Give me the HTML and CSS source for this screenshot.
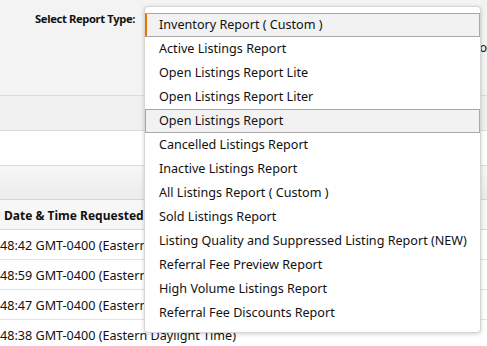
FILE: index.html
```html
<!DOCTYPE html>
<html lang="en">
<head>
<meta charset="utf-8">
<title>Select Report Type</title>
<link rel="stylesheet" href="styles.css">
</head>
<body>
<div class="page">
  <section class="form-area">
    <div class="field-row">
      <span class="field-label">Select Report Type:</span>
      <span class="behind-text">Process</span>
    </div>
  </section>
  <div class="band band-gray"></div>
  <div class="band band-white"></div>
  <div class="band band-grad"></div>
  <div class="table">
    <div class="row head">Date &amp; Time Requested</div>
    <div class="row">48:42 GMT-0400 (Eastern Daylight Time)</div>
    <div class="row">48:59 GMT-0400 (Eastern Daylight Time)</div>
    <div class="row">48:47 GMT-0400 (Eastern Daylight Time)</div>
    <div class="row">48:38 GMT-0400 (Eastern Daylight Time)</div>
  </div>
  <ul class="dropdown">
    <li class="opt selected">Inventory Report ( Custom )</li>
    <li class="opt">Active Listings Report</li>
    <li class="opt">Open Listings Report Lite</li>
    <li class="opt">Open Listings Report Liter</li>
    <li class="opt hover">Open Listings Report</li>
    <li class="opt">Cancelled Listings Report</li>
    <li class="opt">Inactive Listings Report</li>
    <li class="opt">All Listings Report ( Custom )</li>
    <li class="opt">Sold Listings Report</li>
    <li class="opt">Listing Quality and Suppressed Listing Report (NEW)</li>
    <li class="opt">Referral Fee Preview Report</li>
    <li class="opt">High Volume Listings Report</li>
    <li class="opt">Referral Fee Discounts Report</li>
  </ul>
</div>
</body>
</html>
```

FILE: styles.css
```css
html, body {
  margin: 0;
  padding: 0;
}
body {
  background: #f3f3f3;
  font-family: "Noto Sans", "Open Sans", sans-serif;
  color: #111;
  width: 487px;
  height: 346px;
  overflow: hidden;
}
.page {
  position: relative;
  width: 487px;
  height: 346px;
  overflow: hidden;
}
.form-area {
  height: 96px;
  border-bottom: 1px solid #dcdcdc;
  box-sizing: border-box;
}
.field-row {
  display: flex;
  align-items: flex-start;
  padding: 11px 0 0 35px;
  position: relative;
}
.field-label {
  font-size: 11.2px;
  font-weight: 700;
  line-height: 16px;
  letter-spacing: -0.35px;
}
.behind-text {
  position: absolute;
  left: 467px;
  top: 40px;
  font-size: 12.6px;
  line-height: 16px;
  white-space: nowrap;
}
.band {
  box-sizing: border-box;
}
.band-gray {
  height: 35px;
  background: #f0f0f0;
  border-bottom: 1px solid #dcdcdc;
}
.band-white {
  height: 35px;
  background: #fff;
  border-bottom: 1px solid #dcdcdc;
}
.band-grad {
  height: 34px;
  background: linear-gradient(#f7f7f7, #ececec);
  border-bottom: 1px solid #d5d5d5;
}
.table {
  background: #fff;
}
.row {
  height: 30px;
  line-height: 31px;
  box-sizing: border-box;
  border-bottom: 1px solid #e3e3e3;
  font-size: 12.6px;
  white-space: nowrap;
}
.row.head {
  background: #f7f7f7;
  font-weight: 700;
  font-size: 12px;
  padding-left: 4px;
  border-bottom-color: #d8d8d8;
}
.dropdown {
  position: absolute;
  left: 144px;
  top: 6px;
  width: 337px;
  margin: 0;
  padding: 6px 0 7px;
  list-style: none;
  background: #fff;
  border: 1px solid #d6d6d6;
  border-radius: 4px;
  box-shadow: 0 1px 4px rgba(0, 0, 0, 0.18);
  box-sizing: border-box;
}
.opt {
  height: 24px;
  line-height: 21px;
  box-sizing: border-box;
  border: 1px solid transparent;
  padding-left: 13px;
  font-size: 12.6px;
  color: #111;
  white-space: nowrap;
}
.opt.selected {
  background: #f2f2f2;
  border-color: #a8a8a8;
  border-left: 2px solid #e77600;
  padding-left: 12px;
}
.opt.hover {
  background: #f2f2f2;
  border-color: #a8a8a8;
}
```
